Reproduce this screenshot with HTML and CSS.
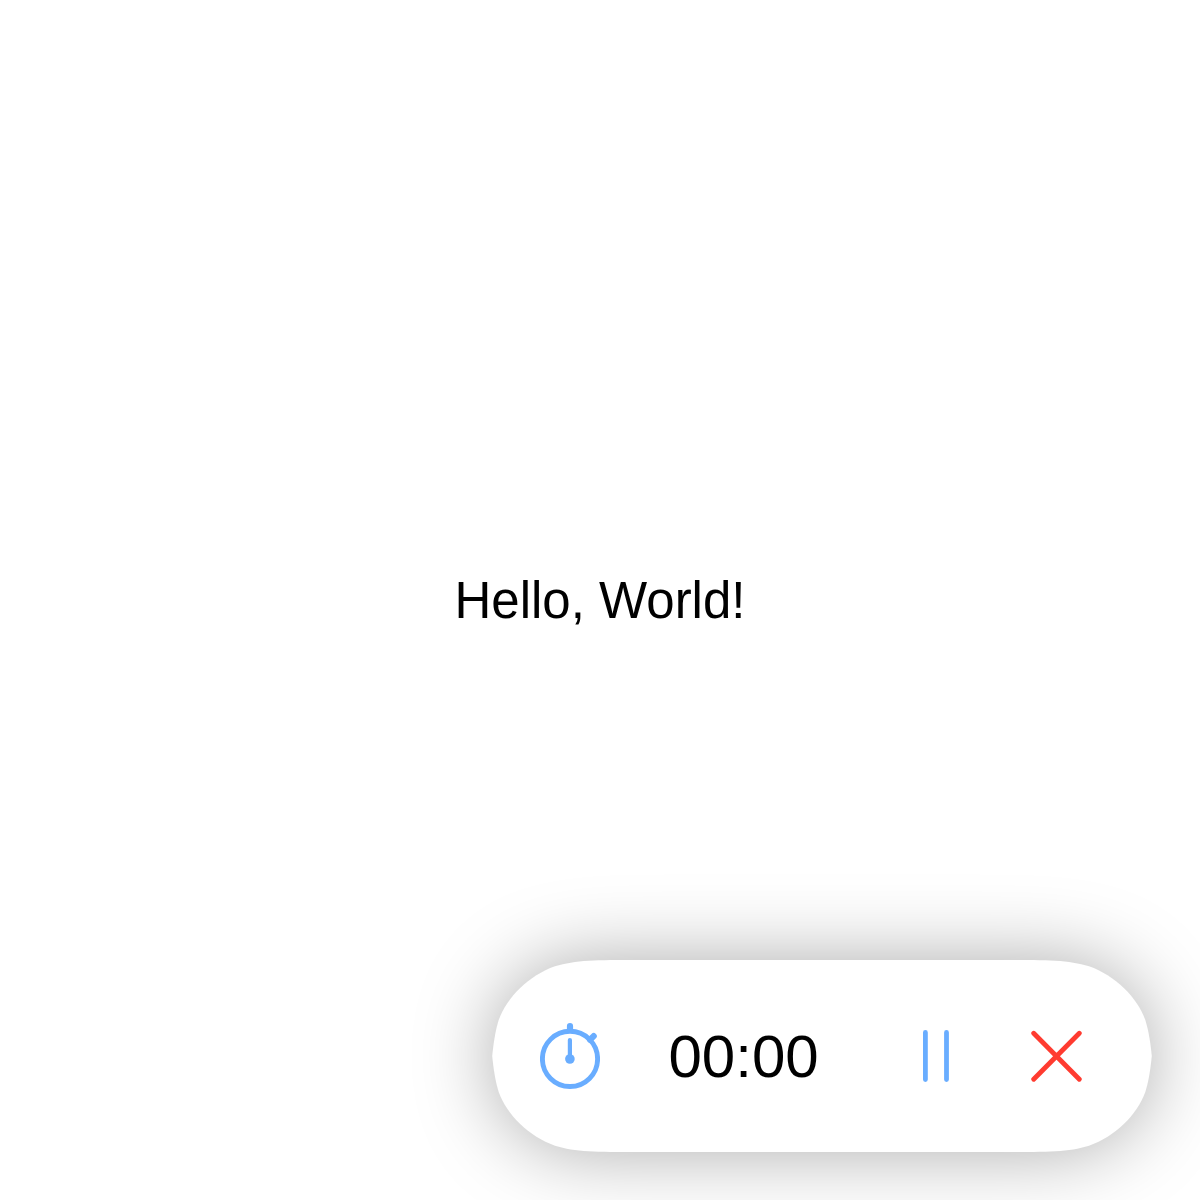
FILE: index.html
```html
<!DOCTYPE html>
<html lang="en">
<head>
<meta charset="utf-8">
<title>Timer</title>
<link rel="stylesheet" href="styles.css">
</head>
<body>
<main class="screen">
  <p class="greeting">Hello, World!</p>
  <section class="timer">
    <svg class="timer-shape" viewBox="0 0 660 192" aria-hidden="true">
      <path d="M146.7 0H513.3C555.5 0 576.6 0 597 6.3C623 15.5 645 37 653.3 60C656.5 70 658.5 83 659.8 96C658.5 109 656.5 122 653.3 132C645 155 623 176.5 597 185.7C576.6 192 555.5 192 513.3 192H146.7C104.5 192 83.4 192 63 185.7C37 176.5 15 155 6.7 132C3.5 122 1.5 109 0.2 96C1.5 83 3.5 70 6.7 60C15 37 37 15.5 63 6.3C83.4 0 104.5 0 146.7 0Z"/>
    </svg>
    <svg class="icon stopwatch" viewBox="0 0 60 72" aria-hidden="true">
      <circle cx="30" cy="38.9" r="27.6" stroke-width="4.9"/>
      <path d="M30 6.2V10M53.7 16.1L50 19.8" stroke-width="6.2"/>
      <path d="M29.9 20V39" stroke-width="4.2"/>
      <circle class="hub" cx="29.9" cy="39" r="4.8"/>
    </svg>
    <span class="time">00:00</span>
    <svg class="icon pause" viewBox="0 0 26 52" aria-hidden="true">
      <path d="M2.4 2.5V49.5M23.5 2.5V49.5" stroke-width="4.8"/>
    </svg>
    <svg class="icon close" viewBox="0 0 52 52" aria-hidden="true">
      <path d="M2.7 3.2L48.3 49.3M48.3 3.2L2.7 49.3" stroke-width="4.8"/>
    </svg>
  </section>
</main>
</body>
</html>
```
FILE: styles.css
```css
body {
  margin: 0;
  background: #fff;
  color: #000;
  font-family: "Liberation Sans", Arial, sans-serif;
}

.screen {
  position: relative;
  display: flex;
  align-items: center;
  justify-content: center;
  height: 1200px;
  overflow: hidden;
}

.greeting {
  margin: 0;
  padding-top: 2px;
  font-size: 51px;
  line-height: 60px;
}

.timer {
  position: absolute;
  right: 48px;
  bottom: 48px;
  display: flex;
  align-items: center;
  box-sizing: border-box;
  width: 660px;
  height: 192px;
  padding-left: 48px;
}

.timer-shape {
  position: absolute;
  inset: 0;
  width: 660px;
  height: 192px;
  overflow: visible;
  fill: #fff;
  filter: drop-shadow(0 0 39px rgba(0, 0, 0, 0.33));
}

.icon {
  position: relative;
  flex: none;
  fill: none;
  stroke: #69adff;
  stroke-linecap: round;
}

.stopwatch {
  width: 60px;
  height: 72px;
}

.hub {
  fill: #69adff;
  stroke: none;
}

.time {
  position: relative;
  width: 149.5px;
  margin-left: 68.5px;
  padding-top: 2px;
  font-size: 60px;
  line-height: 70px;
}

.pause {
  width: 26px;
  height: 52px;
  margin-left: 105px;
}

.close {
  width: 52px;
  height: 52px;
  margin-left: 82px;
  stroke: #ff3b30;
}
```
